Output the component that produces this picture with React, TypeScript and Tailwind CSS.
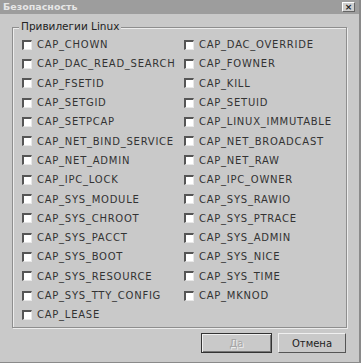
import React from 'react';

const left = [
  'CAP_CHOWN', 'CAP_DAC_READ_SEARCH', 'CAP_FSETID', 'CAP_SETGID', 'CAP_SETPCAP',
  'CAP_NET_BIND_SERVICE', 'CAP_NET_ADMIN', 'CAP_IPC_LOCK', 'CAP_SYS_MODULE', 'CAP_SYS_CHROOT',
  'CAP_SYS_PACCT', 'CAP_SYS_BOOT', 'CAP_SYS_RESOURCE', 'CAP_SYS_TTY_CONFIG', 'CAP_LEASE',
];
const right = [
  'CAP_DAC_OVERRIDE', 'CAP_FOWNER', 'CAP_KILL', 'CAP_SETUID', 'CAP_LINUX_IMMUTABLE',
  'CAP_NET_BROADCAST', 'CAP_NET_RAW', 'CAP_IPC_OWNER', 'CAP_SYS_RAWIO', 'CAP_SYS_PTRACE',
  'CAP_SYS_ADMIN', 'CAP_SYS_NICE', 'CAP_SYS_TIME', 'CAP_MKNOD',
];

const Check = ({ label }: { label: string }) => (
  <div className="flex items-center h-[19.3px]">
    <span className="w-[10px] h-[10px] bg-white border-t-2 border-l-2 border-[#555] border-r border-b border-r-[#e8e8e8] border-b-[#e8e8e8] shrink-0" />
    <span className="ml-[5px] text-[10px] tracking-[0.75px] text-[#333]">{label}</span>
  </div>
);

export default function App() {
  return (
    <div className="w-[361px] h-[363px] bg-[#c9c9c9] flex flex-col border-r-2 border-b border-[#8a8a8a] overflow-hidden" style={{ fontFamily: '"DejaVu Sans", Verdana, sans-serif' }}>
      <div className="h-[14px] bg-[#9d9d9d] flex items-center justify-between pl-[3px] pr-[4px]">
        <span className="text-[9.5px] font-bold text-[#e6e6e6] leading-none">Безопасность</span>
        <span className="w-[13px] h-[10px] bg-[#cfcfcf] border border-t-white border-l-white border-r-[#666] border-b-[#666] flex items-center justify-center text-[9px] font-bold leading-none text-[#222]">×</span>
      </div>
      <div className="relative mx-[12px] mt-[13px] h-[301px] border border-[#8e8e8e] shadow-[inset_1px_1px_0_#ececec,1px_1px_0_#ececec]">
        <span className="absolute -top-[7px] left-[6px] px-[2px] bg-[#c9c9c9] text-[10.5px] leading-none text-[#222]">Привилегии Linux</span>
        <div className="flex pt-[7px] pl-[9px]">
          <div className="flex flex-col w-[162px]">
            {left.map(l => <Check key={l} label={l} />)}
          </div>
          <div className="flex flex-col">
            {right.map(r => <Check key={r} label={r} />)}
          </div>
        </div>
      </div>
      <div className="flex justify-end gap-[6px] mt-[5px] pr-[13px]">
        <div className="w-[71px] h-[20px] border border-[#333] flex items-center justify-center bg-[#c9c9c9] shadow-[inset_1px_1px_0_#f0f0f0,inset_-1px_-1px_0_#777]">
          <span className="text-[10px] text-[#a6a6a6]" style={{ textShadow: '1px 1px 0 #eee' }}>Да</span>
        </div>
        <div className="w-[68px] h-[20px] border border-t-[#f0f0f0] border-l-[#f0f0f0] border-r-[#555] border-b-[#555] flex items-center justify-center bg-[#c9c9c9]">
          <span className="text-[10px] text-[#222]">Отмена</span>
        </div>
      </div>
    </div>
  );
}
